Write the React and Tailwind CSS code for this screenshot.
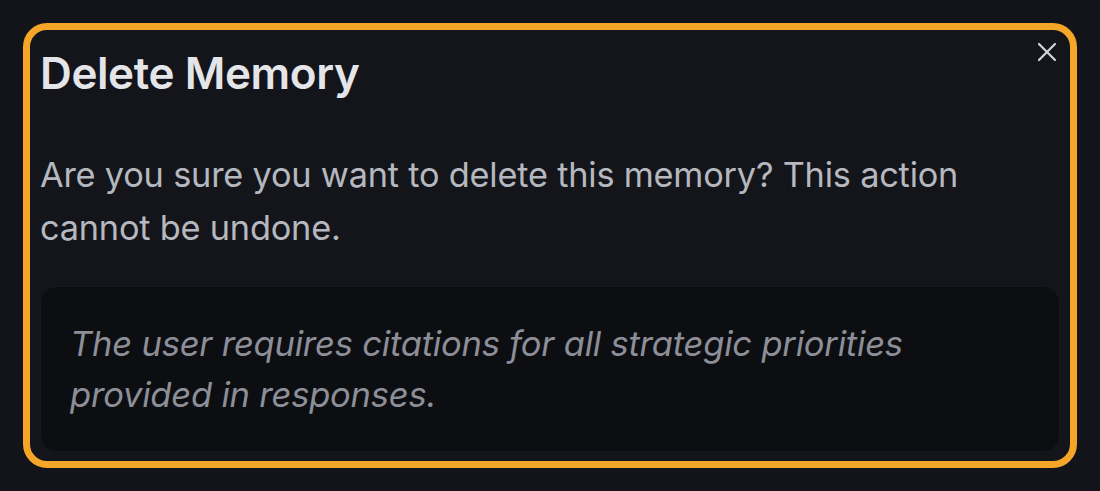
import React from "react";

export default function App() {
  return (
    <div
      className="w-[1100px] h-[491px] bg-[#131419] p-[23px]"
      style={{ fontFamily: "Inter, 'Noto Sans', sans-serif" }}
    >
      <div className="relative h-full rounded-[24px] border-[7px] border-[#f5a628] bg-[#14151b] px-[10px] pb-[9px] flex flex-col">
        <button className="absolute right-[12px] top-[11px] w-[22px] h-[22px] flex items-center justify-center text-[#d4d5da]">
          <svg width="20" height="20" viewBox="0 0 20 20" fill="none" stroke="currentColor" strokeWidth="2.2" strokeLinecap="round">
            <path d="M2 2 L18 18 M18 2 L2 18" />
          </svg>
        </button>
        <h2 className="pt-[17px] text-[44px] leading-[52px] font-semibold text-[#e4e5e9] tracking-[-0.4px]">
          Delete Memory
        </h2>
        <p className="mt-[49px] text-[34.3px] leading-[53px] text-[#b6b8bf] tracking-[-0.2px]">
          Are you sure you want to delete this memory? This action cannot be undone.
        </p>
        <div className="mt-[32px] flex-1 rounded-[16px] bg-[#0d0e12] border border-[#17181e] px-[29px] pt-[31px]">
          <p className="italic text-[34.5px] leading-[51px] text-[#8d8f98] tracking-[-0.2px]">
            The user requires citations for all strategic priorities provided in responses.
          </p>
        </div>
      </div>
    </div>
  );
}
